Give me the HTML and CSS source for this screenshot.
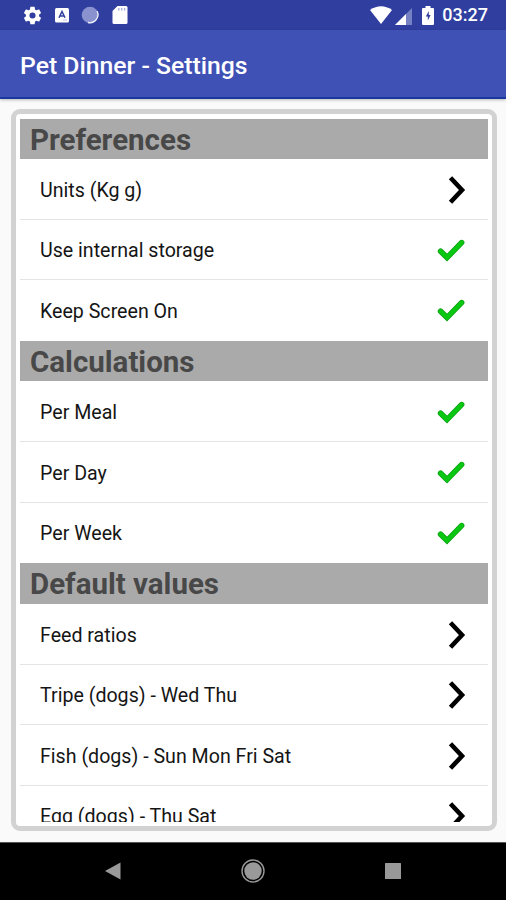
FILE: index.html
```html
<!DOCTYPE html>
<html lang="en">
<head>
<meta charset="utf-8">
<title>Pet Dinner - Settings</title>
<link rel="stylesheet" href="styles.css">
</head>
<body>
<svg width="0" height="0" class="defs">
  <symbol id="chevron" viewBox="0 0 20 30"><path d="M2.500 2.700 14 15 2.500 27.300" fill="none" stroke="#000" stroke-width="4.600"/></symbol>
  <symbol id="check" viewBox="0 0 30 26"><path d="M4.600 13.200 11 19.600 25.600 4.600" fill="none" stroke="#0a9d12" stroke-width="5.600" stroke-linecap="round"/><path d="M4.600 13.200 11 19.600 25.600 4.600" fill="none" stroke="#0ac812" stroke-width="4.200" stroke-linecap="round"/></symbol>
</svg>
<div class="screen">
  <header class="status">
    <div class="status-left">
      <svg width="21" height="21" viewBox="0 0 24 24"><path fill="#fff" d="M19.43 12.98c.04-.32.07-.64.07-.98s-.03-.66-.07-.98l2.11-1.65a.5.5 0 0 0 .12-.64l-2-3.46a.5.5 0 0 0-.61-.22l-2.49 1a7.300 7.300 0 0 0-1.690-.98l-.38-2.650A.49.490 0 0 0 14 2h-4a.49.490 0 0 0-.49.42l-.38 2.650c-.61.25-1.170.59-1.690.98l-2.490-1a.49.490 0 0 0-.61.22l-2 3.460a.49.490 0 0 0 .12.640l2.110 1.650c-.04.32-.07.65-.07.98s.03.66.07.98l-2.110 1.650a.5.5 0 0 0-.12.640l2 3.460c.12.22.39.3.61.22l2.490-1c.52.4 1.080.73 1.690.98l.38 2.650c.03.24.24.42.49.42h4c.25 0 .46-.18.49-.42l.38-2.650c.61-.25 1.170-.59 1.690-.98l2.490 1c.23.09.49 0 .61-.22l2-3.460a.5.5 0 0 0-.12-.640zM12 15.500a3.500 3.500 0 1 1 0-7 3.500 3.500 0 0 1 0 7z"/></svg>
      <svg width="14" height="16" viewBox="0 0 14 16"><rect y="1" width="14" height="14.500" rx="1.500" fill="#fff"/><path d="M4 10.800 7 4.500l3 6.300M5 9h4" fill="none" stroke="#303f9f" stroke-width="1.500"/><path d="M8 13h4" stroke="#bfc5e5"/></svg>
      <svg width="18" height="18" viewBox="0 0 18 18"><circle cx="9" cy="9" r="8.300" fill="#8992cf"/><path d="M16 5A8 8 0 0 1 7 16.500" fill="none" stroke="#eef0fa" stroke-width="1.300"/></svg>
      <svg width="16" height="20" viewBox="0 0 16 20"><path d="M5.500 1H14q1.500 0 1.500 1.500v15q0 1.500-1.500 1.500H2Q.5 19 .5 17.500V6z" fill="#fff"/><path d="M6.800 3v2.500M9.700 3v2.500M12.600 3v2.500" stroke="#a4abd9" stroke-width="1.300"/></svg>
    </div>
    <div class="status-right">
      <svg class="wifi" width="22" height="18" viewBox="0 0 22 18"><path d="M0 4Q11-3.500 22 4L11 18z" fill="#fff"/></svg>
      <svg class="signal" width="17" height="17" viewBox="0 0 17 17"><path d="M17 0v17H0z" fill="#7681c3"/><path d="M11 6v11H0z" fill="#fff"/></svg>
      <svg class="battery" width="12" height="19" viewBox="0 0 12 19"><path d="M3.500 0h5v2H11q1 0 1 1v15q0 1-1 1H1q-1 0-1-1V3q0-1 1-1h2.500z" fill="#fff"/><path d="M6.800 5 3.800 10.500h2v4L8.600 9H6.800z" fill="#303f9f"/></svg>
      <span class="clock">03:27</span>
    </div>
  </header>
  <div class="toolbar"><h1>Pet Dinner - Settings</h1></div>
  <main>
    <div class="card"><div class="list">
      <section>
        <h2>Preferences</h2>
        <div class="row"><span>Units (Kg g)</span><svg class="chevron"><use href="#chevron"/></svg></div>
        <div class="row"><span>Use internal storage</span><svg class="check"><use href="#check"/></svg></div>
        <div class="row"><span>Keep Screen On</span><svg class="check"><use href="#check"/></svg></div>
      </section>
      <section>
        <h2>Calculations</h2>
        <div class="row"><span>Per Meal</span><svg class="check"><use href="#check"/></svg></div>
        <div class="row"><span>Per Day</span><svg class="check"><use href="#check"/></svg></div>
        <div class="row"><span>Per Week</span><svg class="check"><use href="#check"/></svg></div>
      </section>
      <section>
        <h2>Default values</h2>
        <div class="row"><span>Feed ratios</span><svg class="chevron"><use href="#chevron"/></svg></div>
        <div class="row"><span>Tripe (dogs) - Wed Thu</span><svg class="chevron"><use href="#chevron"/></svg></div>
        <div class="row"><span>Fish (dogs) - Sun Mon Fri Sat</span><svg class="chevron"><use href="#chevron"/></svg></div>
        <div class="row"><span>Egg (dogs) - Thu Sat</span><svg class="chevron"><use href="#chevron"/></svg></div>
      </section>
    </div></div>
  </main>
  <nav>
    <svg width="18" height="20" viewBox="0 0 18 20"><path d="M1 10 16.500 1.500v17z" fill="#999"/></svg>
    <svg width="24" height="24" viewBox="0 0 24 24"><circle cx="12" cy="12" r="11" fill="none" stroke="#999" stroke-width="1.400"/><circle cx="12" cy="12" r="8.700" fill="#999"/></svg>
    <svg width="18" height="18" viewBox="0 0 18 18"><rect x="1" y="1" width="16" height="16" rx=".5" fill="#999"/></svg>
  </nav>
</div>
</body>
</html>
```

FILE: styles.css
```css
* { box-sizing: border-box; }
body { margin: 0; font-family: Roboto, "Liberation Sans", sans-serif; background: #fafafa; }
svg { display: block; flex: none; }
.defs { display: none; }
.screen { width: 506px; height: 900px; display: flex; flex-direction: column; overflow: hidden; }
.status { height: 30px; flex: none; background: #303f9f; display: flex; align-items: center; justify-content: space-between; padding: 0 18px 0 22px; }
.status-left, .status-right { display: flex; align-items: center; }
.status-left { gap: 12px; }
.status-left svg:nth-child(4) { margin-left: 1px; }
.wifi { margin-right: 3px; }
.signal { margin: 2px 10px 0 0; }
.battery { margin-right: 8px; }
.clock { color: #fff; font-size: 18px; font-weight: 500; line-height: 32px; }
.toolbar { height: 69px; flex: none; background: #3f51b5; border-bottom: 2px solid #1938a0; display: flex; align-items: center; padding: 5px 0 0 20px; box-shadow: 0 1px 3px #0004; }
h1 { margin: 0; color: #fff; font-size: 24.750px; font-weight: 500; line-height: 30px; white-space: nowrap; }
main { flex: 1; min-height: 0; padding: 10px 9px 11px 11px; }
.card { height: 722px; border: 5px solid #d2d2d2; border-radius: 9px; background: #fff; padding: 4.500px 4.500px 4.500px 4px; }
.list { height: 100%; overflow: hidden; }
section { display: flex; flex-direction: column; }
h2 { margin: 0; height: 40.500px; padding-left: 10px; background: #aaa; color: #484848; font-size: 29.500px; line-height: 43px; font-weight: 700; }
.row { height: 60.670px; flex: none; display: flex; align-items: center; justify-content: space-between; padding: 2.500px 0 0 20px; border-bottom: 1.500px solid #e4e4e4; color: #151515; font-size: 19.620px; white-space: nowrap; }
section:not(:last-child) .row:last-child { border-bottom-color: transparent; }
.chevron { width: 20px; height: 30px; margin: -1px 20px 0 0; }
.check { width: 30px; height: 26px; margin-right: 22px; }
nav { height: 58px; flex: none; background: #000; border-top: 1px solid #555; display: flex; align-items: center; justify-content: space-between; padding: 0 104px 2px; }
```
